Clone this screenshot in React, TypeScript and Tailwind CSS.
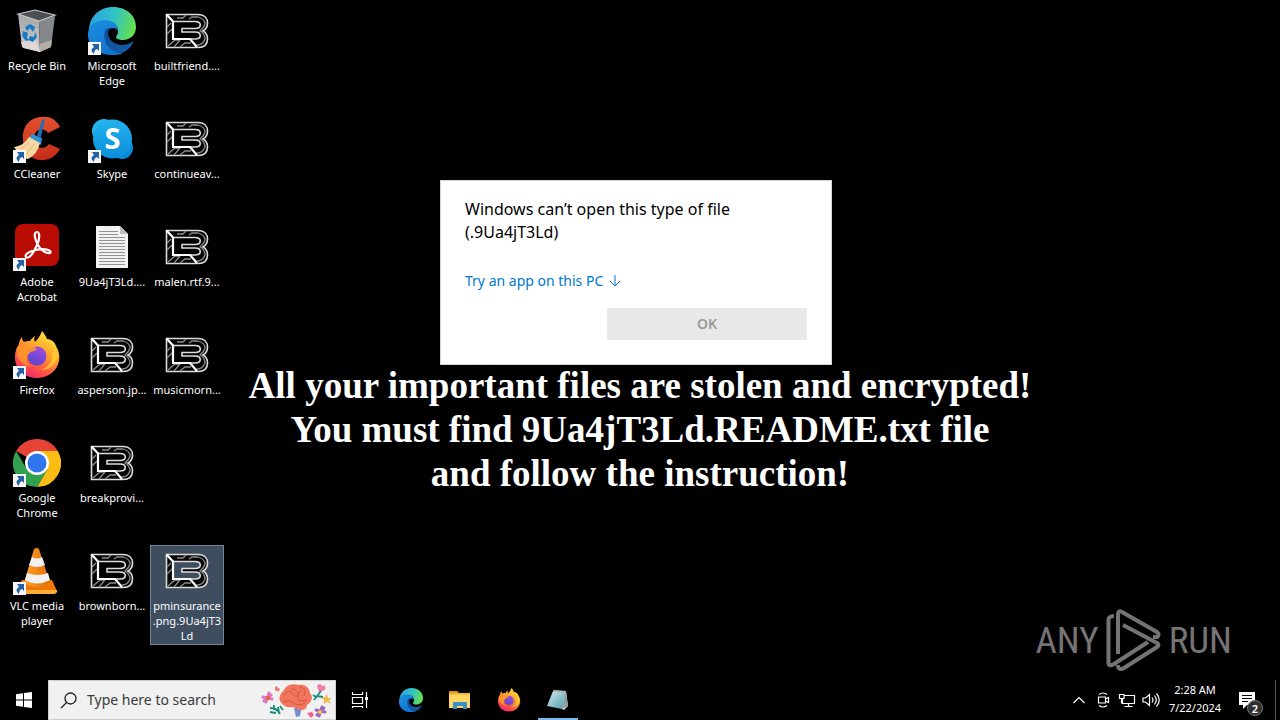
import type { ReactNode } from "react";

type IconName =
  | "bin" | "edge" | "locked" | "ccleaner" | "skype" | "acrobat" | "text" | "firefox" | "chrome" | "vlc";

interface DesktopItem {
  label: string;
  icon: IconName;
  shortcut?: boolean;
  selected?: boolean;
}

const columns: DesktopItem[][] = [
  [
    { label: "Recycle Bin", icon: "bin" },
    { label: "CCleaner", icon: "ccleaner", shortcut: true },
    { label: "Adobe Acrobat", icon: "acrobat", shortcut: true },
    { label: "Firefox", icon: "firefox", shortcut: true },
    { label: "Google Chrome", icon: "chrome", shortcut: true },
    { label: "VLC media player", icon: "vlc", shortcut: true },
  ],
  [
    { label: "Microsoft Edge", icon: "edge", shortcut: true },
    { label: "Skype", icon: "skype", shortcut: true },
    { label: "9Ua4jT3Ld....", icon: "text" },
    { label: "asperson.jp...", icon: "locked" },
    { label: "breakprovi...", icon: "locked" },
    { label: "brownborn...", icon: "locked" },
  ],
  [
    { label: "builtfriend....", icon: "locked" },
    { label: "continueav...", icon: "locked" },
    { label: "malen.rtf.9...", icon: "locked" },
    { label: "musicmorn...", icon: "locked" },
    { label: "", icon: "locked" },
    { label: "pminsurance\n.png.9Ua4jT3\nLd", icon: "locked", selected: true },
  ],
];

function Gradients() {
  return (
    <svg className="absolute size-0" aria-hidden="true">
      <defs>
        <linearGradient id="edgeTop" x1="0" y1="0.3" x2="1" y2="0.5">
          <stop offset="0" stopColor="#2a9fe0" />
          <stop offset="0.5" stopColor="#2fc3c8" />
          <stop offset="1" stopColor="#67e04a" />
        </linearGradient>
        <linearGradient id="edgeLeft" x1="0" y1="0" x2="0.6" y2="1">
          <stop offset="0" stopColor="#1c8fe0" />
          <stop offset="1" stopColor="#1473cf" />
        </linearGradient>
        <linearGradient id="edgeDark" x1="0" y1="0" x2="1" y2="1">
          <stop offset="0" stopColor="#0e4b96" />
          <stop offset="1" stopColor="#155fae" />
        </linearGradient>
        <linearGradient id="fox" x1="0.8" y1="0" x2="0.25" y2="1">
          <stop offset="0" stopColor="#ffe83d" />
          <stop offset="0.4" stopColor="#ffa52a" />
          <stop offset="0.75" stopColor="#ff4f45" />
          <stop offset="1" stopColor="#ee2377" />
        </linearGradient>
        <linearGradient id="foxGlobe" x1="0.7" y1="0" x2="0.3" y2="1">
          <stop offset="0" stopColor="#a04be0" />
          <stop offset="1" stopColor="#5b45d0" />
        </linearGradient>
        <linearGradient id="skypeBlue" x1="0" y1="0" x2="0" y2="1">
          <stop offset="0" stopColor="#22b2ee" />
          <stop offset="1" stopColor="#0b8fdc" />
        </linearGradient>
        <linearGradient id="coneOrange" x1="0" y1="0" x2="1" y2="0">
          <stop offset="0" stopColor="#ffa12e" />
          <stop offset="1" stopColor="#e56d00" />
        </linearGradient>
        <linearGradient id="ccRed" x1="0" y1="0" x2="0" y2="1">
          <stop offset="0" stopColor="#e2502f" />
          <stop offset="1" stopColor="#c52c1a" />
        </linearGradient>
        <linearGradient id="binSide" x1="0" y1="0" x2="0" y2="1">
          <stop offset="0" stopColor="#a2a4a6" />
          <stop offset="1" stopColor="#d4d0cd" />
        </linearGradient>
        <linearGradient id="notes" x1="0" y1="0" x2="1" y2="1">
          <stop offset="0" stopColor="#d3f0f4" />
          <stop offset="1" stopColor="#4c97aa" />
        </linearGradient>
      </defs>
    </svg>
  );
}

function Edge() {
  return (
    <>
      <path d="M1 24C1 10 11 0 25 0c14 0 23 9 23 20 0 8-6 13-13 13-4 0-7-1-7-3 0-1 2-2 2-6 0-6-5-10-12-10C9 14 3 18 1 24Z" fill="url(#edgeTop)" />
      <path d="M0 26c1-8 8-13 17-13 8 0 13 5 13 11-1-2-3-3-5-3-5 0-7 5-7 9 0 9 8 17 17 16-4 2-8 2-12 2C9 48-1 38 0 26Z" fill="url(#edgeLeft)" />
      <path d="M17 24c-3 12 6 22 16 22 6-2 10-6 12-10 1-1 0-2-1-1-3 2-6 3-10 3-8 0-14-6-14-12 0-2 1-4 2-5-3 0-4 1-5 3Z" fill="url(#edgeDark)" />
    </>
  );
}

function Firefox() {
  return (
    <>
      <path d="M29 0c3 3 4 6 5 8 4 0 8 3 9 7 3 5 4 10 3 15-2 10-11 17-22 17C11 47 2 38 2 26c0-5 1-9 4-13 0-2 1-5 3-7 0 3 1 4 2 5 2-1 4-1 6-1 1-2 3-4 5-5-1 2-1 4 0 6 3-3 5-6 7-11Z" fill="url(#fox)" />
      <circle cx="24" cy="25" r="9.500" fill="url(#foxGlobe)" />
      <path d="M4 17c4-4 10-3 14-1 3 0 6 1 6 2-1 2-4 2-6 3-2 1-3 3-4 4-1 5 1 9 5 11-8-1-13-6-15-12Z" fill="#ff9a28" opacity=".82" />
      <path d="M34 8c5 5 7 12 5 20-2 6-7 10-12 11 9 1 17-6 18-15 0-7-5-14-11-16Z" fill="#ffcf38" opacity=".75" />
    </>
  );
}

const art: Record<IconName, ReactNode> = {
  locked: (
    <>
      <path d="M3.500 7.500H35C42 7.500 44.500 12 44.500 16C44.500 20 43 22.500 40 24C43 25.500 44.500 28 44.500 32C44.500 38 41 40.500 35 40.500H3.500Z M10 14.500V32H32C39 32 39 25 32 25H19V21.500H32C39 21.500 39 14.500 32 14.500Z" fill="#050505" fillRule="evenodd" stroke="#dcdcdc" strokeWidth="1.600" />
      <path d="M4 20 8 16M4 27 9 22M5 39 12 33H17L11 40M17 40 22 36H28M14 11H20L23 8M26 12 29 10H35Q42 12 42 17Q41 21 37 24Q42 27 42 32Q40 38 34 38" fill="none" stroke="#8c8c8c" strokeWidth="1.300" />
      <path d="M3.500 7.500 10 14.500V32H27L34 40" fill="none" stroke="#fff" strokeWidth="2.200" />
    </>
  ),
  edge: <Edge />,
  firefox: <Firefox />,
  bin: (
    <>
      <path d="M5 7 26 14 27 45 9 40Z" fill="url(#binSide)" />
      <path d="M26 14 42 9 38 40 27 45Z" fill="#85888b" />
      <path d="M5 7 22 3 42 8 26 14Z" fill="#4d5052" stroke="#c5c8ca" strokeWidth="1.200" />
      <path d="M8 35 22 32 27 45 10 41Z" fill="#ded7d2" />
      <path d="M27 37 39 33 38 40 27 45Z" fill="#b5afaa" />
      <g fill="#167ac6">
        <path d="m12 20 5-3 5 3-2 5-3-4-3 3Z" />
        <path d="m10 24 5 2-1 5 2 2-3 1-4-5Z" />
        <path d="m17 29 4 1 1-5 2 5-4 5-5-2Z" />
      </g>
    </>
  ),
  ccleaner: (
    <>
      <path d="M47 12C43 4 36 1 29 2 17 2 9 12 10 24c0 13 9 22 20 21 7 0 13-4 17-11l-11-5c-5 7-15 4-15-5 0-10 9-13 14-6Z" fill="url(#ccRed)" />
      <path d="M29 5 32 4 28 22 24 21Z" fill="#236db5" />
      <path d="m19 19 10 4-1 7-12-7Z" fill="#3292d8" />
      <path d="M16 22 27 28C25 36 21 41 15 44 10 43 5 38 1 32c7-1 11-4 15-10Z" fill="#f6d9a0" />
      <path d="m16 27-8 7m13-5-8 11" stroke="#e0b878" fill="none" />
    </>
  ),
  skype: (
    <>
      <circle cx="16" cy="16" r="12" fill="#23b5ee" />
      <circle cx="34" cy="33" r="11" fill="#078bd7" />
      <circle cx="24.500" cy="24" r="19.500" fill="url(#skypeBlue)" />
      <text x="24.500" y="34" textAnchor="middle" fontSize="29" fontWeight="700" fontFamily="Open Sans, Noto Sans, sans-serif" fill="white">S</text>
    </>
  ),
  acrobat: (
    <>
      <rect x="2" y="1" width="44" height="42" rx="8" fill="#b90d03" />
      <path d="M24 9c-4 0-2 8 1 13 3 6 9 9 12 8 3-3-7-5-14-3-7 1-12 5-10 7 3 3 8-5 11-12 3-6 3-13 0-13Z" fill="none" stroke="white" strokeWidth="2.200" />
    </>
  ),
  text: (
    <>
      <path d="M8 3H32L40 11V45H8Z" fill="#f1f1f1" />
      <path d="M32 3V11H40Z" fill="#bcbcbc" />
      <path d="M11 8.500H30M11 11.500H30M11 14.500H37M11 17.500H37M11 20.500H37M11 23.500H37M11 26.500H37M11 29.500H37M11 32.500H37M11 35.500H37M11 38.500H37M11 41.500H37" stroke="#929292" strokeWidth="1" />
    </>
  ),
  chrome: (
    <>
      <path d="M24 24 3.200 12A24 24 0 0 1 44.800 12Z" fill="#e54335" />
      <path d="M24 12H44.800A24 24 0 0 1 24 48L34.400 30Z" fill="#fbbc14" />
      <path d="M3.200 12 13.600 30 24 36 34 31 24 48A24 24 0 0 1 3.200 12Z" fill="#30a14e" />
      <circle cx="24" cy="24" r="12" fill="#fff" />
      <circle cx="24" cy="24" r="9.500" fill="#2f76ed" />
    </>
  ),
  vlc: (
    <>
      <path d="M9 33H39L44 44Q44 46 42 46H5Q2 46 3 43Z" fill="#ed7a08" />
      <path d="M3 43H44V45L42 47H5Z" fill="#ffab38" />
      <path d="M21 2Q24 0 26 2L37 36Q24 44 11 36Z" fill="url(#coneOrange)" />
      <path d="m19 10-3 8q8 4 16 0l-3-8q-5 3-10 0ZM14 26l-2 7q12 7 25 0l-2-7q-11 4-21 0Z" fill="#f2f2f2" />
    </>
  ),
};

function Shortcut() {
  return (
    <svg className="absolute bottom-0 left-0 size-[13px]" viewBox="0 0 13 13" aria-hidden="true">
      <path d="M0 0H13V13H0Z" fill="#f7f7f7" />
      <path d="M4 2H11V9L9 7Q6 8 6 12Q1 8 6 5Z" fill="#2561a5" />
    </svg>
  );
}

function DesktopIcon({ item }: { item: DesktopItem }) {
  if (!item.label) return <div className="h-[108px]" />;
  return (
    <div className="h-[108px]">
      <button
        className={
          item.selected
            ? "flex w-full flex-col items-center border border-[#71879b] bg-[#3e4e5f] pt-px pb-px"
            : "flex w-full flex-col items-center px-px pt-0.5"
        }
      >
        <span className="relative block size-12">
          <svg className="size-12" viewBox="0 0 48 48" aria-hidden="true">{art[item.icon]}</svg>
          {item.shortcut && <Shortcut />}
        </span>
        <span className="mt-[3px] w-full text-center text-[11px] leading-[15px] whitespace-pre-line text-white">
          {item.label}
        </span>
      </button>
    </div>
  );
}

function Watermark() {
  return (
    <div className="absolute right-12 bottom-12 flex items-center gap-[7px] font-['Liberation_Sans_Narrow','Roboto_Condensed','Liberation_Sans',sans-serif] text-[37px] leading-none text-[#747474]">
      <span>ANY</span>
      <svg className="h-16 w-14" viewBox="0 0 56 64" fill="none" stroke="#747474" strokeWidth="4" strokeLinejoin="round" aria-hidden="true">
        <path d="M8 8Q2 8 2.500 13V55Q3 59 8 56L42 34" />
        <path d="M12 46V6Q12 2 16 4L51 24Q54 27 51 29H47" />
        <path d="M17 17 51 35Q54 37 51 39L18 60Q12 63 12 57" />
      </svg>
      <span>RUN</span>
    </div>
  );
}

function Dialog() {
  return (
    <section
      role="dialog"
      aria-labelledby="dialog-title"
      className="absolute top-[180px] left-[440px] flex w-[392px] flex-col items-start border border-[#d5d5d5] bg-white px-6 pt-[17px] pb-6"
    >
      <h1 id="dialog-title" className="text-base leading-[23px] text-black">
        Windows can’t open this type of file
        <br />
        (.9Ua4jT3Ld)
      </h1>
      <a href="#apps" className="mt-[27px] flex items-center gap-1.5 text-sm leading-5 text-[#0078d0]">
        Try an app on this PC
        <svg className="size-3" viewBox="0 0 12 12" fill="none" stroke="currentColor" aria-hidden="true">
          <path d="M6 0V11M1 6 6 11 11 6" />
        </svg>
      </a>
      <button disabled className="mt-[17px] h-8 w-[200px] self-end bg-[#e8e8e8] text-sm font-semibold text-[#999]">
        OK
      </button>
    </section>
  );
}

function BrainArt() {
  return (
    <svg className="h-9 w-[74px]" viewBox="0 0 74 36" aria-hidden="true">
      <path d="M20 19C18 13 23 10 25 6C30 1 35 2 39 3C46 2 49 6 50 11C54 15 51 21 47 23C47 29 38 30 34 25C29 26 23 25 20 19Z" fill="#f0755c" />
      <path d="M34 26 41 28 40 34 36 35Z" fill="#6e8fcb" />
      <path d="M24 13q5-7 9-1t8-4M31 6q9 3 7 9t9 3M23 20q7-3 11 1t11 0M40 5q7 2 4 9" fill="none" stroke="#d3563f" strokeWidth="1" />
      <g fill="none" strokeWidth="3" strokeLinecap="round">
        <path d="M3 15 12 17M9 11 6 20M4 19 11 13" stroke="#d979bd" />
        <path d="M56 28 65 30M62 25 59 34M57 33 64 26" stroke="#9a67bd" />
      </g>
      <circle cx="8" cy="16" r="2" fill="#f15842" /><circle cx="60" cy="30" r="2" fill="#f5c25a" />
      <path d="m15 5q2-2 3 1 3 0 1 3-3 1-4-1Z" fill="#ee7d75" />
      <path d="M57 4q3-4 5 0 5-1 3 4l-6 2Z" fill="#f47aa6" />
      <path d="m47 31 5-1 2 3-3 3Z" fill="#ee638d" />
      <path d="M54 18 61 9M53 13l3 2M57 14l6 1M10 26q7 0 10 6M14 23v5M18 25l1 6M10 30l6 1M20 24l3 4" stroke="#188b7b" strokeWidth="1.800" fill="none" />
      <path d="m67 12 1 4 4 0-3 2 2 4-4-2-3 2 0-4-3-2 4-1Z" fill="#edbd55" />
    </svg>
  );
}

function TaskButton({ label, active, children }: { label: string; active?: boolean; children: ReactNode }) {
  return (
    <button aria-label={label} className="relative flex h-10 w-12 items-center justify-center">
      {children}
      {active && <span className="absolute bottom-0 left-1 h-0.5 w-10 bg-[#76b9ed]" />}
    </button>
  );
}

function TrayButton({ label, children }: { label: string; children: ReactNode }) {
  return (
    <button aria-label={label} className="flex h-10 w-6 items-center justify-center">
      <svg className="size-[18px]" viewBox="0 0 18 18" fill="none" stroke="white" strokeWidth="1.200" aria-hidden="true">{children}</svg>
    </button>
  );
}

function Taskbar() {
  return (
    <footer className="relative flex h-10 w-full items-center bg-black text-white">
      <TaskButton label="Start">
        <svg className="size-4" viewBox="0 0 16 16" fill="white" aria-hidden="true">
          <path d="M0 2.200 7 1.200V7.500H0ZM8 1 16 0V7.500H8ZM0 8.500H7V14.800L0 13.800ZM8 8.500H16V16L8 15Z" />
        </svg>
      </TaskButton>
      <label className="flex h-10 w-72 items-center border border-[#cfcfcf] bg-[#f1f1f1] pl-[11px] pr-px">
        <svg className="size-[17px] shrink-0" viewBox="0 0 17 17" fill="none" stroke="#202020" strokeWidth="1.300" aria-hidden="true">
          <circle cx="10.500" cy="6.500" r="5.500" /><path d="M6.500 10.500 1 16" />
        </svg>
        <input
          aria-label="Search"
          placeholder="Type here to search"
          className="ml-2.5 min-w-0 flex-1 bg-transparent text-sm text-black outline-none placeholder:text-[#3a3a3a]"
        />
        <BrainArt />
      </label>
      <TaskButton label="Task View">
        <svg className="size-[18px]" viewBox="0 0 18 18" fill="none" stroke="white" strokeWidth="1.200" aria-hidden="true">
          <path d="M1.500 1V3.500H11.500V1M1.500 6.500H11.500V12.500H1.500ZM1.500 17V15.500H11.500V17M15.500 1V17" />
          <path d="M14 6H17V9H14Z" fill="white" stroke="none" />
        </svg>
      </TaskButton>
      <nav aria-label="Pinned apps" className="ml-[3px] flex gap-px">
        <TaskButton label="Microsoft Edge">
          <svg className="size-6" viewBox="0 0 48 48" aria-hidden="true"><Edge /></svg>
        </TaskButton>
        <TaskButton label="File Explorer">
          <svg className="size-6" viewBox="0 0 24 24" aria-hidden="true">
            <path d="M1 4Q1 3 2 3H9L11 5H1Z" fill="#e39b1c" />
            <path d="M1 5H22V20H1Z" fill="#ffd664" />
            <path d="M1 5H22V7H1Z" fill="#f5bd3b" />
            <path d="M5 21V15Q5 14 6 14H18Q19 14 19 15V21H15V18H9V21Z" fill="#3b91c5" />
          </svg>
        </TaskButton>
        <TaskButton label="Firefox">
          <svg className="size-6" viewBox="0 0 48 48" aria-hidden="true"><Firefox /></svg>
        </TaskButton>
        <TaskButton label="Notepad" active>
          <svg className="size-6" viewBox="0 0 24 24" aria-hidden="true">
            <path d="M8 2 20 3 22 18 18 22 14 20Z" fill="#ddd7c7" />
            <path d="M7 3 20 4 16 21 1 18Z" fill="url(#notes)" />
            <path d="M7 3 20 4" stroke="#999" strokeWidth="1.500" strokeDasharray="1 1" />
            <path d="M20 4 22 18 16 21Z" fill="#8e9da0" />
          </svg>
        </TaskButton>
      </nav>
      <div className="ml-auto flex items-center">
        <TrayButton label="Show hidden icons"><path d="M3.500 12 9 6.500 14.500 12" /></TrayButton>
        <TrayButton label="Meet Now">
          <path d="M4.500 6H11.500V12H4.500ZM11.500 8 14.500 6.500V11.500L11.500 10M5 3.500Q9 .5 13 3.500M5 14.500Q9 17.500 13 14.500" />
        </TrayButton>
        <TrayButton label="Network">
          <path d="M6 4.500H16.500V12.500H4.500V8M10.500 12.500V15.500M6.500 15.500H14.500M1.500 3.500H6V7.500H1.500ZM3.500 7.500V12.500" />
        </TrayButton>
        <TrayButton label="Volume">
          <path d="M1 7H3.500L7.500 3.500V14.500L3.500 11H1ZM10 6.500Q12 9 10 11.500M12.500 4.500Q16 9 12.500 13.500M14.500 2.500Q20 9 14.500 15.500" />
        </TrayButton>
        <button className="ml-0.5 w-[60px] pb-0.5 text-center text-[11px] leading-[18px] whitespace-nowrap">
          2:28 AM
          <br />
          7/22/2024
        </button>
        <button aria-label="Notifications, 2 new" className="relative flex h-10 w-11 items-center justify-center">
          <svg className="size-[18px]" viewBox="0 0 18 18" aria-hidden="true">
            <path d="M1 1H17V14H9L5 18V14H1Z" fill="white" />
            <path d="M4 4.500H14M4 7.500H14M4 10.500H10" stroke="black" />
          </svg>
          <span className="absolute right-1.5 bottom-1 flex size-4 items-center justify-center rounded-full border border-[#777] bg-[#303030] text-[11px] leading-none font-semibold">2</span>
        </button>
        <span className="mr-1 ml-1.5 h-10 w-px bg-[#555]" />
      </div>
    </footer>
  );
}

export default function App() {
  return (
    <div className="relative flex h-screen min-h-[720px] w-full flex-col overflow-hidden bg-black font-['Noto_Sans','Open_Sans',sans-serif]">
      <Gradients />
      <p className="absolute inset-x-0 top-[364px] text-center font-['Liberation_Serif',serif] text-[37px] leading-[44px] font-bold text-white">
        All your important files are stolen and encrypted!
        <br />
        You must find 9Ua4jT3Ld.README.txt file
        <br />
        and follow the instruction!
      </p>
      <Watermark />
      <main className="relative flex flex-1 items-start pt-[5px]">
        {columns.map((items, i) => (
          <div key={i} className="w-[75px] shrink-0 pr-px">
            {items.map((item, j) => <DesktopIcon key={j} item={item} />)}
          </div>
        ))}
      </main>
      <Dialog />
      <Taskbar />
    </div>
  );
}
